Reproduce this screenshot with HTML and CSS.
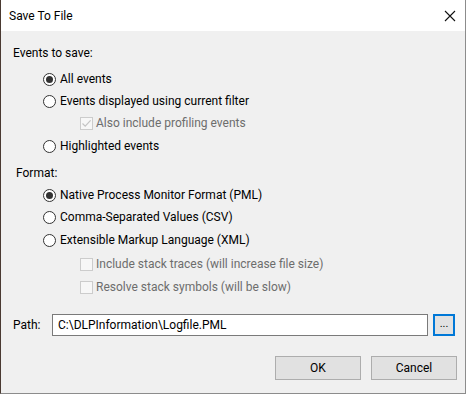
FILE: index.html
```html
<!DOCTYPE html>
<html>
<head>
<meta charset="utf-8">
<link rel="stylesheet" href="styles.css">
</head>
<body>
<div class="window">
  <div class="titlebar">
    <span class="title">Save To File</span>
    <svg class="close" width="12" height="12" viewBox="0 0 12 12"><path d="M1 1 L11 11 M11 1 L1 11" stroke="#111" stroke-width="1.1" fill="none"/></svg>
  </div>
  <div class="content">
    <div class="label l1">Events to save:</div>
    <div class="row r-first"><span class="radio on"></span><span>All events</span></div>
    <div class="row"><span class="radio"></span><span>Events displayed using current filter</span></div>
    <div class="row sub disabled"><span class="check checked"><svg width="11" height="11" viewBox="0 0 11 11"><path d="M1.5 5.5 L4.2 8.2 L9.6 2.3" stroke="#c4c4c4" stroke-width="1.2" fill="none"/></svg></span><span>Also include profiling events</span></div>
    <div class="row m1"><span class="radio"></span><span>Highlighted events</span></div>
    <div class="label l2">Format:</div>
    <div class="row"><span class="radio on"></span><span>Native Process Monitor Format (PML)</span></div>
    <div class="row"><span class="radio"></span><span>Comma-Separated Values (CSV)</span></div>
    <div class="row m1"><span class="radio"></span><span>Extensible Markup Language (XML)</span></div>
    <div class="row sub disabled m2"><span class="check"></span><span>Include stack traces (will increase file size)</span></div>
    <div class="row sub disabled m1"><span class="check"></span><span>Resolve stack symbols (will be slow)</span></div>
    <div class="pathrow">
      <span class="pathlabel">Path:</span>
      <div class="input">C:\DLPInformation\Logfile.PML</div>
      <div class="browse">...</div>
    </div>
    <div class="buttons">
      <div class="btn">OK</div>
      <div class="btn">Cancel</div>
    </div>
  </div>
</div>
</body>
</html>
```
FILE: styles.css
```css
html, body {
  margin: 0;
  padding: 0;
  background: #f0f0f0;
}
body {
  font-family: Roboto, "Noto Sans", sans-serif;
  font-size: 12px;
  color: #000;
}
.window {
  border-left: 1px solid #4a3a32;
  border-right: 1px solid #8c8c8c;
  border-bottom: 1px solid #8c8c8c;
  box-sizing: border-box;
  width: 466px;
  height: 394px;
  background: #f0f0f0;
  display: flex;
  flex-direction: column;
}
.titlebar {
  height: 31px;
  background: #fff;
  display: flex;
  align-items: center;
  justify-content: space-between;
  padding: 0 9px 0 8px;
  flex: none;
}
.title {
  font-size: 12px;
  padding-top: 1px;
}
.content {
  padding-top: 11px;
  display: flex;
  flex-direction: column;
}
.label {
  height: 22px;
  line-height: 22px;
}
.l1 { padding-left: 12px; }
.l2 { padding-left: 15px; margin-top: 5px; }
.row {
  height: 22px;
  display: flex;
  align-items: center;
  padding-left: 42px;
  gap: 4px;
}
.r-first { margin-top: 4px; }
.m1 { margin-top: 1px; }
.m2 { margin-top: 2px; }
.row.sub { padding-left: 79px; gap: 3px; }
.disabled { color: #6d6d6d; }
.radio {
  width: 13px;
  height: 13px;
  border: 1px solid #333;
  border-radius: 50%;
  box-sizing: border-box;
  background: #fff;
  display: flex;
  align-items: center;
  justify-content: center;
  flex: none;
}
.radio.on::after {
  content: "";
  width: 7px;
  height: 7px;
  border-radius: 50%;
  background: #333;
}
.check {
  width: 13px;
  height: 13px;
  border: 1px solid #cccccc;
  box-sizing: border-box;
  background: #f7f7f7;
  display: flex;
  align-items: center;
  justify-content: center;
  flex: none;
}
.check svg { display: block; }
.pathrow {
  margin-top: 16px;
  display: flex;
  align-items: center;
  height: 22px;
  padding-left: 12px;
}
.pathlabel {
  width: 39px;
}
.input {
  width: 376px;
  height: 22px;
  box-sizing: border-box;
  border: 1px solid #7a7a7a;
  background: #fff;
  padding-left: 5px;
  line-height: 20px;
}
.browse {
  margin-left: 5px;
  width: 22px;
  height: 22px;
  box-sizing: border-box;
  border: 2px solid #0078d7;
  background: #e1e1e1;
  text-align: center;
  line-height: 16px;
  font-size: 11px;
}
.buttons {
  margin-top: 20px;
  display: flex;
  justify-content: flex-end;
  gap: 10px;
  padding-right: 8px;
}
.btn {
  width: 86px;
  height: 24px;
  box-sizing: border-box;
  border: 1px solid #adadad;
  background: #e1e1e1;
  text-align: center;
  line-height: 22px;
}
```
